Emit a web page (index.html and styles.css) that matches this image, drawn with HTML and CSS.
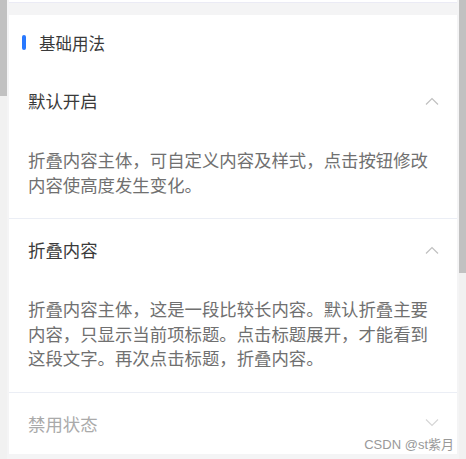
FILE: index.html
```html
<!DOCTYPE html>
<html lang="zh-CN">
  <head>
    <meta charset="UTF-8" />
    <meta name="viewport" content="width=device-width, initial-scale=1.0" />
    <title>折叠面板</title>
    <link rel="stylesheet" href="styles.css">
  </head>

  <body>
    <div class="side-bar">
      <div class="side-thumb"></div>
    </div>

    <div class="page">
      <div class="prev-card"></div>

      <div class="card">
        <div class="section-title">
          <span class="mark"></span>
          <span>基础用法</span>
        </div>

        <div class="collapse-item">
          <div class="collapse-head">
            <span>默认开启</span>
            <svg class="arrow" width="14" height="8" viewBox="0 0 14 8">
              <polyline points="1,7.5 7,1.5 13,7.5" />
            </svg>
          </div>
          <div class="collapse-body">
            折叠内容主体，可自定义内容及样式，点击按钮修改内容使高度发生变化。
          </div>
        </div>

        <div class="collapse-item">
          <div class="collapse-head">
            <span>折叠内容</span>
            <svg class="arrow" width="14" height="8" viewBox="0 0 14 8">
              <polyline points="1,7.5 7,1.5 13,7.5" />
            </svg>
          </div>
          <div class="collapse-body">
            折叠内容主体，这是一段比较长内容。默认折叠主要内容，只显示当前项标题。点击标题展开，才能看到这段文字。再次点击标题，折叠内容。
          </div>
        </div>

        <div class="collapse-item disabled">
          <div class="collapse-head">
            <span>禁用状态</span>
            <svg class="arrow" width="14" height="8" viewBox="0 0 14 8">
              <polyline points="1,0.5 7,6.5 13,0.5" />
            </svg>
          </div>
        </div>
      </div>

      <div class="watermark">CSDN @st紫月</div>
    </div>

    <div class="side-bar">
      <div class="scroll-thumb"></div>
    </div>
  </body>
</html>
```

FILE: styles.css
```css
body {
  margin: 0;
  height: 459px;
  overflow: hidden;
  display: flex;
  background-color: #f4f4f5;
  font-family: "Microsoft YaHei", "Noto Sans CJK SC", sans-serif;
  color: #3a3a3a;
}

.side-bar {
  width: 7px;
  flex-shrink: 0;
  background-color: #f1f1f1;
}

.side-thumb {
  height: 96px;
  background-color: #c1c1c1;
}

.scroll-thumb {
  height: 273px;
  background-color: #c1c1c1;
}

.page {
  flex: 1;
  position: relative;
  padding: 0 2px;
}

.prev-card {
  height: 2px;
  background-color: #fff;
  border-bottom: 1px solid #ebebf5;
  margin-bottom: 12px;
}

.card {
  background-color: #fff;
  height: 439px;
  overflow: hidden;
}

.section-title {
  height: 55px;
  display: flex;
  align-items: center;
  padding-left: 13px;
  font-size: 16.5px;
}

.mark {
  width: 4px;
  height: 15px;
  border-radius: 2px;
  background-color: #2979ff;
  margin-right: 13px;
}

.collapse-item {
  border-bottom: 1px solid #ebeef5;
}

.collapse-head {
  height: 61px;
  display: flex;
  align-items: center;
  justify-content: space-between;
  padding: 0 18px 0 19px;
  font-size: 17.4px;
}

.arrow {
  fill: none;
  stroke: #c0c0c0;
  stroke-width: 1.2;
}

.collapse-body {
  padding: 17px 19px 21px;
  font-size: 17.4px;
  line-height: 24.5px;
  color: #707070;
}

.disabled .collapse-head {
  color: #aaa;
}

.disabled .arrow {
  stroke: #d6d6d6;
}

.watermark {
  position: absolute;
  right: 5px;
  top: 434px;
  font-family: Arial, "Liberation Sans", "Noto Sans CJK SC", sans-serif;
  font-size: 13px;
  color: #999;
}
```
